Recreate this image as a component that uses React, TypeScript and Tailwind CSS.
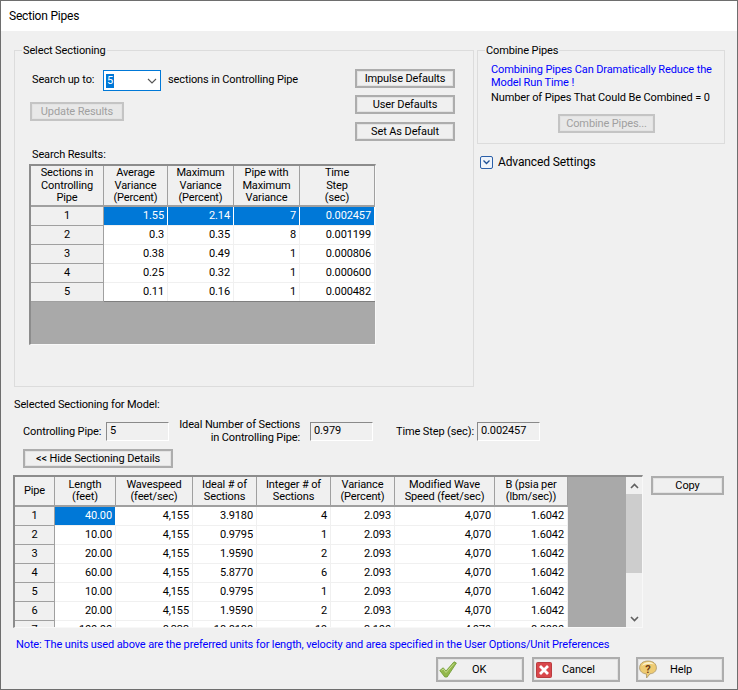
const F = "font-['Roboto','Liberation_Sans',sans-serif]";

function Btn({ w, label, disabled, cls = "" }: { w: string; label: string; disabled?: boolean; cls?: string }) {
  return (
    <div className={`${w} h-[19px] shrink-0 border-2 flex items-center justify-center whitespace-nowrap leading-none shadow-[inset_0_0_0_1px_#e3e3e3] ${disabled ? "text-[#a0a0a0] bg-[#e8e8e8] border-[#c4c4c4]" : "text-black bg-[#f0f0f0] border-[#adadad]"} ${cls}`}>
      {label}
    </div>
  );
}

function RO({ v, w }: { v: string; w: string }) {
  return (
    <div className={`${w} h-[19px] shrink-0 border border-t-[#8a8a8a] border-l-[#8a8a8a] border-r-white border-b-white pl-[3px] leading-[15px]`}>
      {v}
    </div>
  );
}

const top = [
  ["1", "1.55", "2.14", "7", "0.002457"],
  ["2", "0.3", "0.35", "8", "0.001199"],
  ["3", "0.38", "0.49", "1", "0.000806"],
  ["4", "0.25", "0.32", "1", "0.000600"],
  ["5", "0.11", "0.16", "1", "0.000482"],
];
const topW = [73, 64, 66, 66, 75];
const topH = [
  ["Sections in", "Controlling", "Pipe"],
  ["Average", "Variance", "(Percent)"],
  ["Maximum", "Variance", "(Percent)"],
  ["Pipe with", "Maximum", "Variance"],
  ["Time", "Step", "(sec)"],
];

const bottom = [
  ["1", "40.00", "4,155", "3.9180", "4", "2.093", "4,070", "1.6042"],
  ["2", "10.00", "4,155", "0.9795", "1", "2.093", "4,070", "1.6042"],
  ["3", "20.00", "4,155", "1.9590", "2", "2.093", "4,070", "1.6042"],
  ["4", "60.00", "4,155", "5.8770", "6", "2.093", "4,070", "1.6042"],
  ["5", "10.00", "4,155", "0.9795", "1", "2.093", "4,070", "1.6042"],
  ["6", "20.00", "4,155", "1.9590", "2", "2.093", "4,070", "1.6042"],
  ["7", "100.00", "8,333", "18.8188", "19", "3.100", "4,070", "8.0880"],
];
const botW = [40, 61, 77, 64, 74, 64, 100, 73];
const botH = [
  ["Pipe"],
  ["Length", "(feet)"],
  ["Wavespeed", "(feet/sec)"],
  ["Ideal # of", "Sections"],
  ["Integer # of", "Sections"],
  ["Variance", "(Percent)"],
  ["Modified Wave", "Speed (feet/sec)"],
  ["B (psia per", "(lbm/sec))"],
];

function Check() {
  return (
    <svg width="18" height="17" viewBox="0 0 18 17" className="shrink-0">
      <path d="M0.8 9.5 L4.2 6.8 L7 10 L15 0.8 L17.4 2 L8.2 16 L5.8 16 Z" fill="#93b84c" stroke="#6f9a33" strokeWidth="0.8" strokeLinejoin="round" />
      <path d="M2.5 9.3 L4.3 8 L7 11.5 L15 2.5" fill="none" stroke="#c6dc8e" strokeWidth="1" />
    </svg>
  );
}
function Cross() {
  return (
    <svg width="16" height="16" viewBox="0 0 16 16" className="shrink-0">
      <rect x="0.5" y="0.5" width="15" height="15" rx="1" fill="#d9474b" stroke="#b93c3f" />
      <path d="M4 4 L12 12 M12 4 L4 12" stroke="#fff" strokeWidth="2.8" />
    </svg>
  );
}
function HelpIcon() {
  return (
    <svg width="18" height="19" viewBox="0 0 18 19" className="shrink-0">
      <path d="M9 1 C14 1 17.4 3.6 17.4 7.8 C17.4 11.4 14.5 13.6 11 13.8 L7.6 18 L7.4 14 C3.4 13.6 0.6 11.2 0.6 7.8 C0.6 3.6 4 1 9 1 Z" fill="#eecb72" stroke="#a89468" strokeWidth="0.8" />
      <path d="M3 6 C4 3 7 2 10 2 C12 2 14 3 15 4.5 C11 3.5 6 4 3 6 Z" fill="#faf0cc" />
      <text x="9" y="12.5" textAnchor="middle" fontSize="11" fontWeight="700" fill="#6f3a14">?</text>
    </svg>
  );
}

export default function App() {
  return (
    <div className={`${F} w-[738px] h-[690px] bg-[#f0f0f0] border border-[#6e6e6e] text-black text-[11px] tracking-[-0.12px] overflow-hidden flex flex-col`}>
      <div className="h-[30px] shrink-0 bg-white pl-2 flex items-center text-[12px] tracking-[-0.2px]">Section Pipes</div>

      <div className="flex pl-[13px] pt-[12px] shrink-0">
        <fieldset className="w-[460px] h-[344px] border border-[#dcdcdc] min-w-0 shrink-0">
          <legend className="ml-[7px] px-[1px] leading-[15px]">Select Sectioning</legend>
          <div className="pl-[14px] pr-[18px]">
            <div className="flex justify-between items-start mt-[11px]">
              <div className="flex flex-col">
                <div className="flex items-center pl-[3px] mt-[1px] gap-[7px] whitespace-nowrap">
                  <span className="w-[64px]">Search up to:</span>
                  <div className="w-[58px] h-[21px] border border-[#0078d7] bg-white flex items-center pl-[2px] pr-[3px] justify-between">
                    <span className="bg-[#0078d7] text-white leading-[14px] px-[1px]">5</span>
                    <svg width="10" height="6" viewBox="0 0 10 6"><path d="M1 1 L5 5 L9 1" fill="none" stroke="#555" strokeWidth="1.1" /></svg>
                  </div>
                  <span>sections in Controlling Pipe</span>
                </div>
                <Btn w="w-[94px]" label="Update Results" disabled cls="mt-[11px] ml-[1px]" />
              </div>
              <div className="flex flex-col">
                <Btn w="w-[100px]" label="Impulse Defaults" />
                <Btn w="w-[100px]" label="User Defaults" cls="mt-[7px]" />
                <Btn w="w-[100px]" label="Set As Default" cls="mt-[8px]" />
              </div>
            </div>
            <div className="mt-[7px] pl-[3px] leading-[14px]">Search Results:</div>
            <div className="w-[347px] h-[181px] mt-[2px] border-t-2 border-l-2 border-t-[#8c8c8c] border-l-[#8c8c8c] border-r border-b border-r-[#f8f8f8] border-b-[#f8f8f8] bg-[#a9a9a9] flex flex-col">
              <div className="flex h-[41px] shrink-0 border-b-2 border-[#a0a0a0] bg-[#f0f0f0]">
                {topH.map((h, i) => (
                  <div key={i} style={{ width: topW[i] }} className="border-r border-[#a0a0a0] flex flex-col justify-center pt-[1px] text-center leading-[12.5px] whitespace-nowrap">
                    {h.map((l) => <span key={l}>{l}</span>)}
                  </div>
                ))}
              </div>
              {top.map((r, ri) => (
                <div key={ri} className={`flex h-[19px] shrink-0 border-b ${ri === 4 ? "border-[#7f7f7f]" : "border-[#f0f0f0]"}`}>
                  {r.map((c, i) =>
                    i === 0 ? (
                      <div key={i} style={{ width: topW[i] }} className="bg-[#f0f0f0] border-r border-b -mb-[1px] border-[#a0a0a0] flex items-center justify-center pt-[1px]">{c}</div>
                    ) : (
                      <div key={i} style={{ width: topW[i] }} className={`border-r flex items-center justify-end pt-[1px] pr-[3px] ${ri === 0 ? "bg-[#0078d7] text-white border-white" : "bg-white border-[#f0f0f0]"}`}>{c}</div>
                    )
                  )}
                </div>
              ))}
            </div>
          </div>
        </fieldset>

        <div className="ml-[3px] w-[248px] shrink-0">
          <fieldset className="h-[101px] border border-[#dcdcdc] min-w-0">
            <legend className="ml-[7px] px-[1px] leading-[15px]">Combine Pipes</legend>
            <div className="pl-[13px]">
              <div className="text-[#0000ff] leading-[13px] mt-[5px] whitespace-nowrap">Combining Pipes Can Dramatically Reduce the<br />Model Run Time !</div>
              <div className="mt-[2px] leading-[14px] whitespace-nowrap">Number of Pipes That Could Be Combined = 0</div>
              <Btn w="w-[97px]" label="Combine Pipes..." disabled cls="ml-[67px] mt-[9px]" />
            </div>
          </fieldset>
          <div className="flex items-center mt-[10px] pl-[3px] gap-[5px] text-[12px] leading-[16px]">
            <div className="w-[13px] h-[13px] border border-[#2a5fa8] rounded-[2px] bg-[#eef3fa] flex items-center justify-center">
              <svg width="7" height="5" viewBox="0 0 7 5"><path d="M0.5 0.5 L3.5 3.5 L6.5 0.5" fill="none" stroke="#1c4f96" strokeWidth="1.3" /></svg>
            </div>
            Advanced Settings
          </div>
        </div>
      </div>

      <div className="pl-[13px] mt-[11px] leading-[14px] shrink-0">Selected Sectioning for Model:</div>
      <div className="flex items-start h-[19px] pl-[22px] mt-[10px] shrink-0 whitespace-nowrap">
        <span className="w-[83px] leading-[19px]">Controlling Pipe:</span>
        <RO v="5" w="w-[63px]" />
        <span className="w-[131px] text-right leading-[13px] -mt-[4px]">Ideal Number of Sections<br />in Controlling Pipe:</span>
        <span className="w-[10px]" />
        <RO v="0.979" w="w-[63px]" />
        <span className="w-[23px]" />
        <span className="w-[81px] leading-[19px]">Time Step (sec):</span>
        <RO v="0.002457" w="w-[63px]" />
      </div>
      <Btn w="w-[150px]" label="<< Hide Sectioning Details" cls="ml-[22px] mt-[8px]" />

      <div className="flex pl-[12px] mt-[7px] shrink-0">
        <div className="w-[630px] h-[153px] shrink-0 border-t-2 border-l-2 border-t-[#8c8c8c] border-l-[#8c8c8c] border-r border-b border-r-[#f8f8f8] border-b-[#f8f8f8] bg-[#a9a9a9] flex overflow-hidden">
          <div className="w-[553px] shrink-0">
            <div className="flex h-[30px] border-b-2 border-[#a0a0a0] bg-[#f0f0f0]">
              {botH.map((h, i) => (
                <div key={i} style={{ width: botW[i] }} className="border-r border-[#a0a0a0] flex flex-col justify-center text-center leading-[12px] whitespace-nowrap">
                  {h.map((l) => <span key={l}>{l}</span>)}
                </div>
              ))}
            </div>
            {bottom.map((r, ri) => (
              <div key={ri} className="flex h-[19px] border-b border-[#f0f0f0]">
                {r.map((c, i) =>
                  i === 0 ? (
                    <div key={i} style={{ width: botW[i] }} className="bg-[#f0f0f0] border-r border-b -mb-[1px] border-[#a0a0a0] flex items-center justify-center">{c}</div>
                  ) : (
                    <div key={i} style={{ width: botW[i] }} className={`border-r flex items-center justify-end pr-[3px] ${ri === 0 && i === 1 ? "bg-[#0078d7] text-white border-white" : "bg-white border-[#f0f0f0]"}`}>{c}</div>
                  )
                )}
              </div>
            ))}
          </div>
          <div className="w-[58px] shrink-0" />
          <div className="w-[16px] bg-[#f0f0f0] flex flex-col items-center shrink-0">
            <div className="h-[17px] flex items-center justify-center shrink-0">
              <svg width="9" height="6" viewBox="0 0 9 6"><path d="M1 5 L4.5 1.5 L8 5" fill="none" stroke="#606060" strokeWidth="1.6" /></svg>
            </div>
            <div className="w-full h-[79px] bg-[#cdcdcd] shrink-0" />
            <div className="flex-1" />
            <div className="h-[17px] flex items-center justify-center shrink-0">
              <svg width="9" height="6" viewBox="0 0 9 6"><path d="M1 1 L4.5 4.5 L8 1" fill="none" stroke="#606060" strokeWidth="1.6" /></svg>
            </div>
          </div>
        </div>
        <Btn w="w-[73px]" label="Copy" cls="ml-[8px] mt-[1px]" />
      </div>

      <div className="pl-[15px] mt-[10px] text-[#0000ff] leading-[14px] shrink-0 whitespace-nowrap">Note: The units used above are the preferred units for length, velocity and area specified in the User Options/Unit Preferences</div>

      <div className="flex pl-[435px] mt-[5px] shrink-0">
        <div className="w-[88px] h-[25px] border-2 border-[#adadad] bg-[#f0f0f0] shadow-[inset_0_0_0_1px_#e3e3e3] flex items-center pl-[1px]">
          <Check /><span className="ml-[15px] pt-[1px]">OK</span>
        </div>
        <div className="w-[88px] h-[25px] border-2 border-[#adadad] bg-[#f0f0f0] shadow-[inset_0_0_0_1px_#e3e3e3] flex items-center pl-[2px] ml-[8px]">
          <Cross /><span className="ml-[10px] pt-[1px]">Cancel</span>
        </div>
        <div className="w-[88px] h-[25px] border-2 border-[#adadad] bg-[#f0f0f0] shadow-[inset_0_0_0_1px_#e3e3e3] flex items-center pl-[1px] ml-[16px]">
          <HelpIcon /><span className="ml-[13px] pt-[1px]">Help</span>
        </div>
      </div>
    </div>
  );
}
